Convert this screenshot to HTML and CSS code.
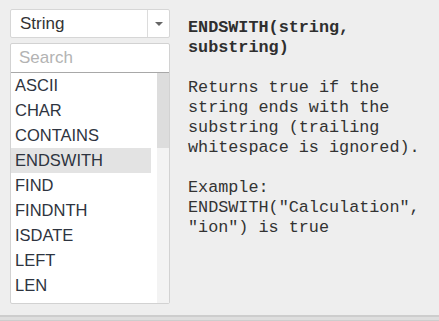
FILE: index.html
```html
<!DOCTYPE html>
<html lang="en">

<head>
    <meta charset="UTF-8">
    <meta name="viewport" content="width=device-width, initial-scale=1.0">
    <title>Functions</title>
    <link rel="stylesheet" href="styles.css">
</head>

<body>
    <main class="calc">
        <section class="functions">
            <div class="select">
                <span class="select-value">String</span>
                <span class="select-arrow">
                    <svg width="8" height="4" viewBox="0 0 8 4"><path d="M0 0h8L4 4z" fill="#666"/></svg>
                </span>
            </div>
            <div class="picker">
                <input class="search" type="text" placeholder="Search">
                <div class="list-wrap">
                    <ul class="list">
                        <li>ASCII</li>
                        <li>CHAR</li>
                        <li>CONTAINS</li>
                        <li class="selected">ENDSWITH</li>
                        <li>FIND</li>
                        <li>FINDNTH</li>
                        <li>ISDATE</li>
                        <li>LEFT</li>
                        <li>LEN</li>
                    </ul>
                    <div class="scrollbar"><div class="thumb"></div></div>
                </div>
            </div>
        </section>
        <section class="doc">
            <h2>ENDSWITH(string, substring)</h2>
            <p>Returns true if the string ends with the substring (trailing whitespace is ignored).</p>
            <p>Example: ENDSWITH("Calculation", "ion") is true</p>
        </section>
    </main>
    <footer class="bottom-bar"></footer>
</body>

</html>
```

FILE: styles.css
```css
*,
*::after,
*::before {
    box-sizing: border-box;
}

body {
    margin: 0;
    background: #eeeeee;
    color: #333;
    font-family: 'Liberation Sans', Arial, sans-serif;
    height: 321px;
    display: flex;
    flex-direction: column;
}

.calc {
    flex: 1;
    display: flex;
    gap: 18px;
    padding: 9px 0 0 10px;
}

.functions {
    width: 160px;
    display: flex;
    flex-direction: column;
    gap: 5px;
}

.select {
    height: 29px;
    background: #fff;
    border: 1px solid #d6d6d6;
    border-radius: 2px;
    display: flex;
    align-items: center;

    .select-value {
        flex: 1;
        padding-left: 9px;
        font-size: 17px;
        color: #333;
    }

    .select-arrow {
        width: 22px;
        height: 100%;
        border-left: 1px solid #dcdcdc;
        display: flex;
        justify-content: center;
        align-items: center;
        padding-top: 1px;
    }
}

.picker {
    height: 261px;
    background: #fff;
    border: 1px solid #d2d2d2;
    border-radius: 2px;
    display: flex;
    flex-direction: column;

    .search {
        height: 29px;
        border: 0;
        border-bottom: 1px solid #a8a8a8;
        padding: 0 0 0 8px;
        font-family: inherit;
        font-size: 17px;
        color: #333;
        outline: none;
        background: transparent;

        &::placeholder {
            color: #b3b3b3;
        }
    }
}

.list-wrap {
    flex: 1;
    display: flex;
}

.list {
    flex: 1;
    list-style: none;
    margin: 0;
    padding: 0 6px 0 0;

    li {
        height: 25px;
        line-height: 25px;
        padding-left: 4px;
        font-size: 16.5px;
        color: #2e3440;
    }

    .selected {
        background: #e3e3e3;
    }
}

.scrollbar {
    width: 12px;
    background: #f3f3f3;

    .thumb {
        height: 75px;
        background: #dddddd;
    }
}

.doc {
    padding-top: 9px;
    font-family: 'Liberation Mono', 'Courier New', monospace;
    font-size: 16.8px;
    line-height: 20px;
    color: #333;
    width: 251px;

    h2 {
        font-size: inherit;
        font-weight: 700;
        margin: 0 0 20px;
        color: #2f2f2f;
    }

    p {
        margin: 0 0 20px;
    }
}

.bottom-bar {
    height: 6px;
    border-top: 2px solid #cdcdcd;
    border-bottom: 1px solid #cdcdcd;
    background: #dedede;
    margin-top: -1px;
}
```
